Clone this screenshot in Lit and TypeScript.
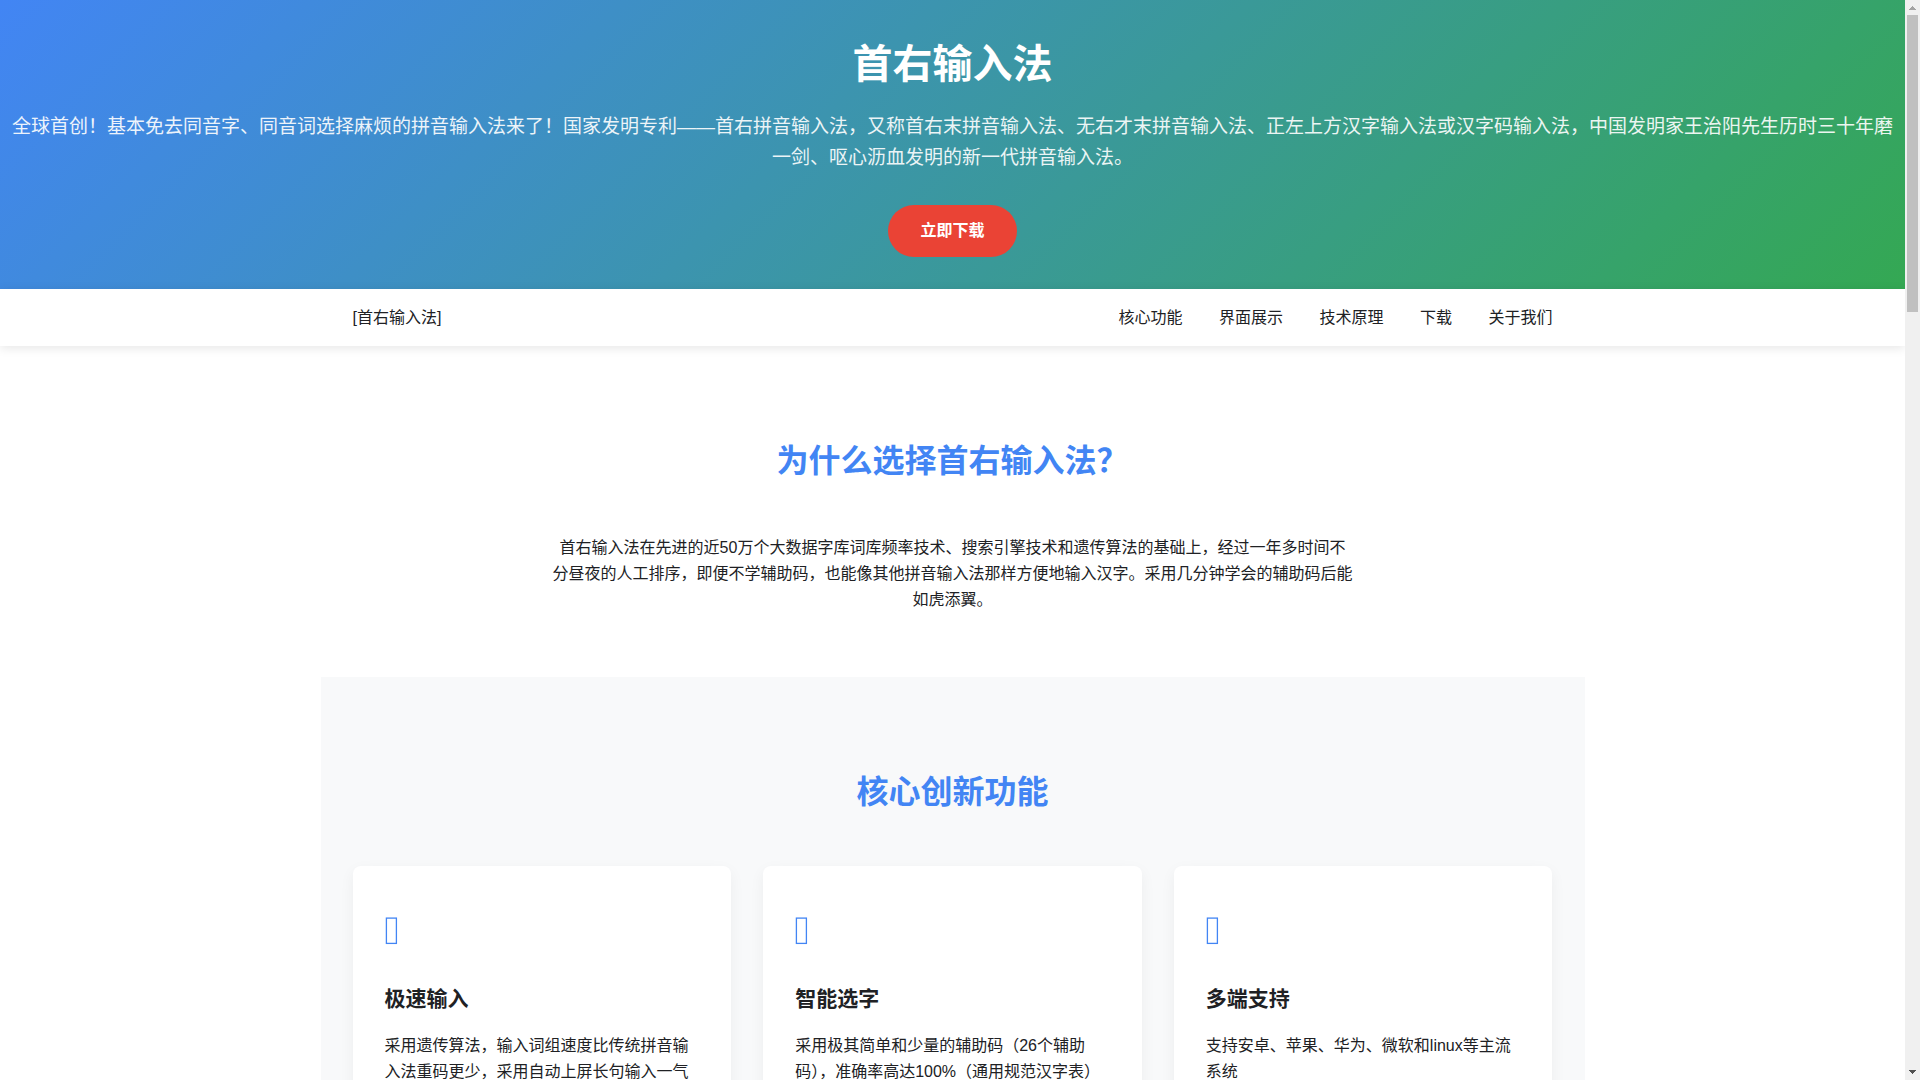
import { LitElement, html, css } from "lit";
import { customElement } from "lit/decorators.js";

interface Feature {
  title: string;
  text: string;
}

const NAV_LINKS = ["核心功能", "界面展示", "技术原理", "下载", "关于我们"];

const FEATURES: Feature[] = [
  {
    title: "极速输入",
    text: "采用遗传算法，输入词组速度比传统拼音输入法重码更少，采用自动上屏长句输入一气",
  },
  {
    title: "智能选字",
    text: "采用极其简单和少量的辅助码（26个辅助码），准确率高达100%（通用规范汉字表）",
  },
  {
    title: "多端支持",
    text: "支持安卓、苹果、华为、微软和linux等主流系统",
  },
];

@customElement("scroll-rail")
export class ScrollRail extends LitElement {
  static styles = css`
    :host {
      display: flex;
      flex-direction: column;
      flex: 0 0 15px;
      background: #f0f0f0;
    }
    .arrow {
      display: block;
      width: 15px;
      height: 15px;
    }
    .lane {
      flex: 1;
      padding: 0 2px;
    }
    .thumb {
      height: 28.3%;
      background: #c0c0c0;
    }
  `;

  render() {
    return html`
      <svg class="arrow" viewBox="0 0 15 15" shape-rendering="crispEdges" aria-hidden="true">
        <path fill="#a3a3a3" d="M7 6h1v1h1v1h1v1h1v1H4V9h1V8h1V7h1z" />
      </svg>
      <div class="lane"><div class="thumb"></div></div>
      <svg class="arrow" viewBox="0 0 15 15" shape-rendering="crispEdges" aria-hidden="true">
        <path fill="#505050" d="M4 5h7v1h-1v1H9v1H8v1H7V8H6V7H5V6H4z" />
      </svg>
    `;
  }
}

@customElement("feature-card")
export class FeatureCard extends LitElement {
  static properties = { heading: { type: String }, text: { type: String } };
  declare heading: string;
  declare text: string;

  static styles = css`
    :host {
      display: block;
      padding: 32px;
      border-radius: 8px;
      background: #fff;
      box-shadow: 0 5px 15px rgba(0, 0, 0, 0.05);
    }
    .icon {
      display: block;
      width: 14px;
      height: 64px;
    }
    .title {
      margin: 20px 0 18px;
      font-size: 21px;
      line-height: 33px;
      font-weight: 700;
    }
    .text {
      margin: 0;
    }
  `;

  render() {
    return html`
      <svg class="icon" viewBox="0 0 14 64" aria-hidden="true">
        <rect x="1.4" y="20.1" width="10" height="25.3" fill="none" stroke="#4285f4" stroke-width="1.3" />
      </svg>
      <h3 class="title">${this.heading}</h3>
      <p class="text">${this.text}</p>
    `;
  }
}

@customElement("app-root")
export class AppRoot extends LitElement {
  static styles = css`
    :host {
      display: flex;
      height: 100vh;
      overflow: hidden;
      background: #fff;
      color: #202124;
      font-family: "Liberation Sans", "Noto Sans CJK SC", sans-serif;
      font-size: 16px;
      line-height: 26px;
    }
    .page {
      flex: 1;
      min-width: 0;
      overflow-y: auto;
      scrollbar-width: none;
    }
    .hero {
      padding: 32px 8px;
      background: linear-gradient(135deg, #4285f4, #34a853);
      color: #fff;
      text-align: center;
    }
    .hero-title {
      margin: 0 0 15px;
      font-size: 40px;
      line-height: 64px;
      font-weight: 700;
    }
    .hero-text {
      margin: 0 0 32px;
      font-size: 19px;
      line-height: 31px;
      opacity: 0.9;
    }
    .download {
      display: block;
      width: fit-content;
      margin: 0 auto;
      padding: 13px 32px;
      border-radius: 50px;
      background: #ea4335;
      color: #fff;
      font-weight: 700;
      line-height: 26px;
      text-decoration: none;
    }
    .bar {
      position: relative;
      z-index: 1;
      padding: 16px 32px;
      background: #fff;
      line-height: 25px;
      box-shadow: 0 2px 10px rgba(0, 0, 0, 0.1);
    }
    .bar-inner {
      display: flex;
      justify-content: space-between;
      max-width: 1200px;
      margin: 0 auto;
    }
    .link {
      margin-left: 32px;
      color: inherit;
      text-decoration: none;
    }
    .section {
      max-width: 1200px;
      margin: 0 auto;
      padding: 64px 32px;
    }
    .tinted {
      background: #f8f9fa;
    }
    .section-title {
      margin: 26px 0 48px;
      color: #4285f4;
      font-size: 32px;
      line-height: 51px;
      font-weight: 700;
      text-align: center;
    }
    .intro {
      max-width: 800px;
      margin: 0 auto;
      text-align: center;
    }
    .cards {
      display: grid;
      grid-template-columns: repeat(auto-fit, minmax(300px, 1fr));
      gap: 32px;
    }
  `;

  render() {
    return html`
      <div class="page">
        <header class="hero">
          <h1 class="hero-title">首右输入法</h1>
          <p class="hero-text">全球首创！基本免去同音字、同音词选择麻烦的拼音输入法来了！国家发明专利——首右拼音输入法，又称首右末拼音输入法、无右才末拼音输入法、正左上方汉字输入法或汉字码输入法，中国发明家王治阳先生历时三十年磨一剑、呕心沥血发明的新一代拼音输入法。</p>
          <a class="download" href="#download">立即下载</a>
        </header>
        <nav class="bar">
          <div class="bar-inner">
            <div>[首右输入法]</div>
            <div>${NAV_LINKS.map((label) => html`<a class="link" href="#">${label}</a> `)}</div>
          </div>
        </nav>
        <main>
          <section class="section">
            <h2 class="section-title">为什么选择首右输入法？</h2>
            <p class="intro">首右输入法在先进的近50万个大数据字库词库频率技术、搜索引擎技术和遗传算法的基础上，经过一年多时间不分昼夜的人工排序，即便不学辅助码，也能像其他拼音输入法那样方便地输入汉字。采用几分钟学会的辅助码后能如虎添翼。</p>
          </section>
          <section class="section tinted">
            <h2 class="section-title">核心创新功能</h2>
            <div class="cards">
              ${FEATURES.map((f) => html`<feature-card .heading=${f.title} .text=${f.text}></feature-card>`)}
            </div>
          </section>
        </main>
      </div>
      <scroll-rail></scroll-rail>
    `;
  }
}
